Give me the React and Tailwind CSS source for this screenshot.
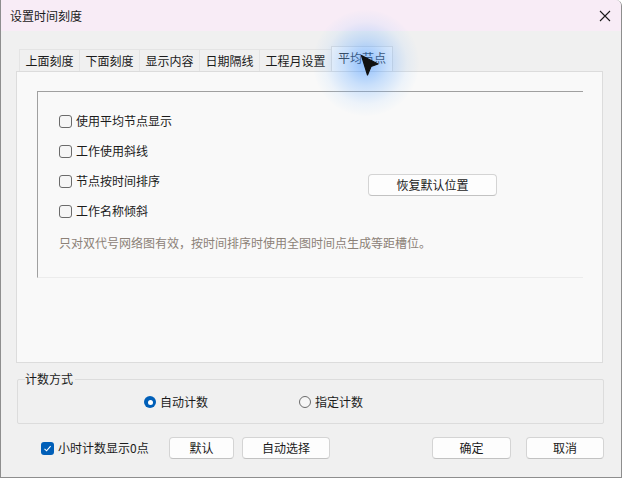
import React, { useState } from 'react';

const font = { fontFamily: '"Noto Sans CJK SC", "Noto Sans", sans-serif' };

const tabs = ['上面刻度', '下面刻度', '显示内容', '日期隔线', '工程月设置', '平均节点'];

function CheckBox({ checked, label, onChange }) {
    return (
        <label className="flex items-center gap-[4px] cursor-default select-none" onClick={onChange}>
            {checked ? (
                <span className="w-[13px] h-[13px] rounded-[3px] bg-[#005fb8] flex items-center justify-center">
                    <svg width="9" height="9" viewBox="0 0 9 9">
                        <path d="M1.5 4.8 L3.6 6.8 L7.6 2.2" fill="none" stroke="#fff" strokeWidth="1.1" />
                    </svg>
                </span>
            ) : (
                <span className="w-[13px] h-[13px] rounded-[3px] border border-[#6b6b6b] bg-[#f6f6f6]" />
            )}
            <span className="text-[12px] leading-[16px] text-[#1b1b1b]">{label}</span>
        </label>
    );
}

function Radio({ checked, label, onChange }) {
    return (
        <label className="flex items-center gap-[4px] cursor-default select-none" onClick={onChange}>
            {checked ? (
                <span className="w-[12px] h-[12px] rounded-full bg-[#005fb8] flex items-center justify-center">
                    <span className="w-[5px] h-[5px] rounded-full bg-white" />
                </span>
            ) : (
                <span className="w-[12px] h-[12px] rounded-full border border-[#6b6b6b] bg-[#f6f6f6]" />
            )}
            <span className="text-[12px] leading-[16px] text-[#1b1b1b]">{label}</span>
        </label>
    );
}

function Btn({ children, className }) {
    return (
        <button className={`h-[22px] rounded-[4px] border border-[#d4d4d4] border-b-[#c2c2c2] bg-[#fdfdfd] text-[12px] leading-[16px] text-[#1b1b1b] ${className}`}>
            {children}
        </button>
    );
}

export default function App() {
    const [checks, setChecks] = useState([false, false, false, false]);
    const [mode, setMode] = useState('auto');
    const [zeroHour, setZeroHour] = useState(true);

    const toggle = (i) => setChecks(checks.map((c, j) => (j === i ? !c : c)));

    return (
        <div className="relative w-[622px] h-[478px] overflow-hidden bg-[#f0f0f0] border-x border-b border-[#8e8e8e] rounded-tr-[6px] flex flex-col" style={font}>
            {/* title bar */}
            <div className="h-[31px] shrink-0 bg-[#f8ecf6] flex items-center justify-between pl-[9px] pr-[10px]">
                <span className="text-[12px] leading-[16px] text-[#1b1b1b]">设置时间刻度</span>
                <svg width="12" height="12" viewBox="0 0 12 12">
                    <path d="M1 1 L11 11 M11 1 L1 11" stroke="#1b1b1b" strokeWidth="1.1" />
                </svg>
            </div>

            <div className="flex flex-col px-[15px] pt-[15px]">
                {/* tabs */}
                <div className="flex items-end h-[25px] pl-[3px]">
                    {tabs.map((t, i) =>
                        i === 5 ? (
                            <div key={t} className="h-[25px] px-[6px] bg-[#f9f9f9] border border-b-0 border-[#dcdcdc] text-[12px] leading-[22px] text-[#1b1b1b]">
                                {t}
                            </div>
                        ) : (
                            <div key={t} className="h-[22px] px-[5.5px] bg-[#f0f0f0] border-l border-t border-[#e4e4e4] text-[12px] leading-[21px] text-[#1b1b1b]">
                                {t}
                            </div>
                        )
                    )}
                </div>

                {/* panel */}
                <div className="h-[292px] w-[587px] bg-[#f9f9f9] border border-[#dcdcdc] pt-[19px] pl-[20px]">
                    <div className="w-[546px] h-[187px] border-t border-l border-[#a0a0a0] border-b border-b-[#ececec] pl-[21px] pt-[14px]">
                        {['使用平均节点显示', '工作使用斜线', '节点按时间排序', '工作名称倾斜'].map((l, i) => (
                            <div key={l} className="h-[30px] flex items-center">
                                <div className="w-[309px]">
                                    <CheckBox checked={checks[i]} label={l} onChange={() => toggle(i)} />
                                </div>
                                {i === 2 && <Btn className="w-[129px] mt-[8px]">恢复默认位置</Btn>}
                            </div>
                        ))}
                        <div className="mt-[9px] text-[12px] leading-[16px] text-[#8c8177]">
                            只对双代号网络图有效，按时间排序时使用全图时间点生成等距槽位。
                        </div>
                    </div>
                </div>

                {/* count mode group */}
                <div className="relative mt-[16px] ml-[1px] w-[587px] h-[45px] border border-[#dcdcdc] rounded-[2px]">
                    <span className="absolute left-[7px] top-[-9px] bg-[#f0f0f0] pr-[2px] text-[12px] leading-[16px] text-[#1b1b1b]">计数方式</span>
                    <div className="flex items-center h-full pt-[1px] pl-[126px]">
                        <div className="w-[155px]">
                            <Radio checked={mode === 'auto'} label="自动计数" onChange={() => setMode('auto')} />
                        </div>
                        <Radio checked={mode === 'set'} label="指定计数" onChange={() => setMode('set')} />
                    </div>
                </div>

                {/* bottom row */}
                <div className="flex items-center mt-[13px] h-[22px]">
                    <div className="pl-[25px] w-[153px]">
                        <CheckBox checked={zeroHour} label="小时计数显示0点" onChange={() => setZeroHour(!zeroHour)} />
                    </div>
                    <Btn className="w-[65px]">默认</Btn>
                    <Btn className="w-[88px] ml-[8px]">自动选择</Btn>
                    <Btn className="w-[79px] ml-[102px]">确定</Btn>
                    <Btn className="w-[78px] ml-[15px]">取消</Btn>
                </div>
            </div>

            {/* cursor with highlight */}
            <div className="absolute left-[312px] top-[10px] w-[106px] h-[106px] rounded-full bg-[radial-gradient(circle,rgba(70,150,255,0.6)_0%,rgba(110,175,255,0.35)_30%,rgba(150,200,255,0.12)_55%,rgba(170,210,255,0)_72%)] pointer-events-none" />
            <svg className="absolute left-[359px] top-[54px] pointer-events-none" width="22" height="24" viewBox="0 0 22 24">
                <path d="M1.5 1.5 L18 10 L11 12.5 L7.5 21 Z" fill="#111" stroke="#111" strokeWidth="1.2" strokeLinejoin="round" />
            </svg>
        </div>
    );
}
